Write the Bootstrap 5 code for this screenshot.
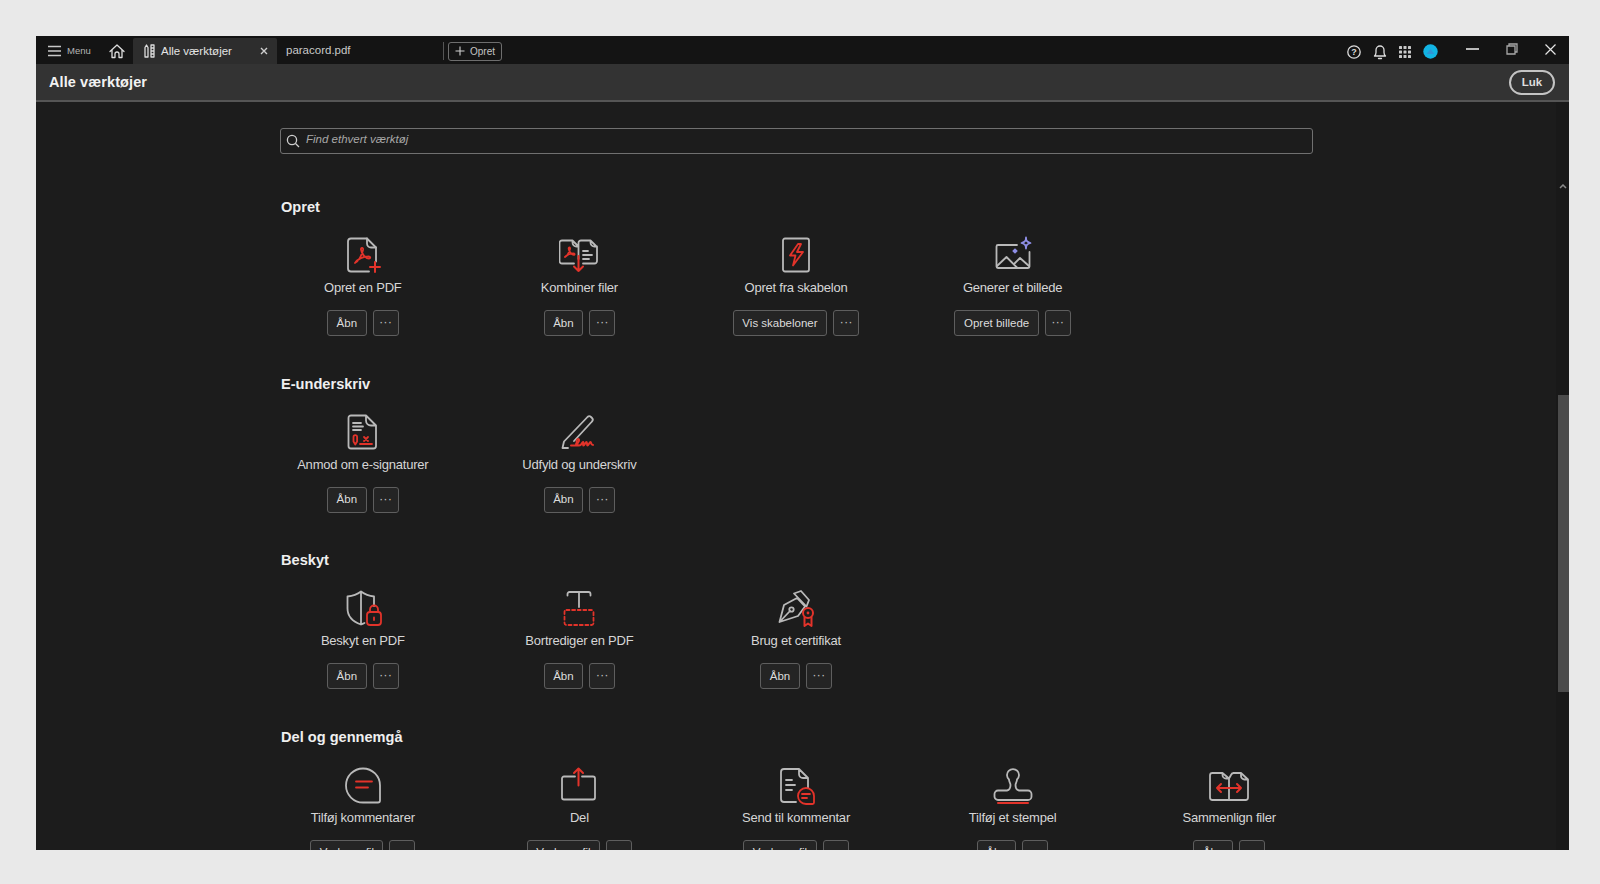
<!DOCTYPE html>
<html lang="da">
<head>
<meta charset="utf-8">
<title>Alle værktøjer</title>
<link href="https://cdn.jsdelivr.net/npm/bootstrap@5.3.0/dist/css/bootstrap.min.css" rel="stylesheet">
<style>
html,body{height:100%;overflow:hidden}
body{background:#e9e9e9;padding:36px 31px 34px 36px;font-family:"Liberation Sans",Arial,sans-serif}
.app-win{height:814px;background:#1c1c1c;color:#d9d9d9;overflow:hidden}
.tab-bar{height:28px;background:#141414;flex:none;padding-top:2px}
.menu-btn{padding-left:12px;width:74px;gap:5px;color:#b5b5b5;font-size:9.500px}
.home-btn{width:23px;margin-left:-1px;margin-right:1px}
.tab-on{width:144px;height:26px;background:#2d2d2d;color:#e4e4e4;font-size:11.500px;padding:0 9px 0 11px;border-radius:2px 2px 0 0}
.tab-lbl{margin-left:6px;padding-top:1px}
.tab-off{width:166px;padding-left:9px;color:#c9c9c9;font-size:11.500px}
.tab-sep{width:1px;height:18px;background:#555;margin-right:4px}
.new-btn{height:19px;width:54px;border:1px solid #6e6e6e;border-radius:3px;font-size:10px;color:#c4c4c4;padding:0 0 0 6px;gap:5px;background:transparent}
.win-tools{padding-right:13px;margin-top:1px}
.tool-bar{height:38px;background:#333;border-bottom:2px solid #555;flex:none;padding:1px 14px 0 13px}
.tool-title{font-size:14.500px;font-weight:700;color:#f2f2f2;letter-spacing:.1px;margin-top:1px}
.luk-btn{width:46px;height:25px;border:2px solid #c4c4c4;border-radius:13px;background:transparent;color:#ddd;font-size:11.500px;font-weight:700;padding:0;line-height:1}
.pane{min-height:0;position:relative}
.pane-in{width:1033px;margin-left:244px}
.find-box{height:26px;margin-top:26px;border:1px solid #707070;border-radius:3px;padding-left:5px;gap:6px;color:#a8a8a8;font-size:11.500px;font-style:italic}
.find-txt{padding-bottom:3px}
.sect-h{font-size:14.600px;font-weight:700;color:#efefef;margin:0;line-height:18px;padding-left:1px}
.sect-a{padding-top:44px}
.sect-wrap{height:176.500px}
.tool-grid{display:grid;grid-template-columns:repeat(5,216.600px);margin:19px 0 0 -25.500px}
.tool-cell{text-align:center}
.tool-ico{display:block;width:40px;height:40px;margin:0 auto}
.tool-name{font-size:13px;line-height:16px;margin-top:5px;color:#d6d6d6;letter-spacing:-.22px;white-space:nowrap}
.act-row{margin-top:14px;gap:6px}
.act-btn{height:26px;border:1px solid #5e5e5e;border-radius:3px;background:#242424;color:#dcdcdc;font-size:11.500px;line-height:1;padding:1px 8.500px 0;white-space:nowrap}
.act-more{width:26px;padding:0 0 3px;color:#bbb;font-size:13px}
.scr-track{position:absolute;right:0;top:0;bottom:0;width:13px;background:#191919}
.scr-up{position:absolute;right:2px;top:82px}
.scr-thumb{position:absolute;right:0;top:293px;width:11px;height:297px;background:#4b4b4b}
svg{flex:none}
.gy{fill:none;stroke:#b9b9b9;stroke-width:1.800;stroke-linecap:round;stroke-linejoin:round}
.rd{fill:none;stroke:#e2332a;stroke-width:1.800;stroke-linecap:round;stroke-linejoin:round}
.lv{fill:none;stroke:#8e8ee6;stroke-width:1.800;stroke-linejoin:round}
.rd-b{stroke-width:2}
.tb-ico{fill:none;stroke:#ddd;stroke-width:1.300;stroke-linecap:round;stroke-linejoin:round}
.gap-a{margin-right:10px}
.gap-b{margin-right:11px}
.gap-c{margin-right:28px}
.gap-d{margin-right:27px;margin-top:-5px}
.gap-e{margin-top:-5px}
</style>
</head>
<body>
<div class="app-win d-flex flex-column">
  <div class="tab-bar d-flex align-items-center">
    <div class="menu-btn d-flex align-items-center"><svg width="14" height="12" viewBox="0 0 14 12"><path d="M0 1.500h13M0 6h13M0 10.500h13" stroke="#c8c8c8" stroke-width="1.300" fill="none"/></svg><span>Menu</span></div>
    <div class="home-btn d-flex align-items-center"><svg width="16" height="15" viewBox="0 0 16 15"><path class="tb-ico" d="M1 7.500 8 1l7 6.500M3 6v7.500h3V10a2 2 0 0 1 4 0v3.500h3V6"/></svg></div>
    <div class="tab-on d-flex align-items-center"><svg width="11" height="14" viewBox="0 0 11 14"><path class="tb-ico" d="M1 3.500 2.500 1 4 3.500V13H1zM7 1h3v12H7zM7 4h3M7 7h3M7 10h3"/></svg><span class="tab-lbl flex-grow-1">Alle værktøjer</span><svg width="8" height="8" viewBox="0 0 8 8"><path d="M1 1l6 6M7 1 1 7" stroke="#cfcfcf" stroke-width="1.400"/></svg></div>
    <div class="tab-off">paracord.pdf</div>
    <div class="tab-sep"></div>
    <button class="new-btn d-flex align-items-center" type="button"><svg width="10" height="10" viewBox="0 0 10 10"><path d="M5 .5v9M.5 5h9" stroke="#d0d0d0" stroke-width="1.100"/></svg><span>Opret</span></button>
    <div class="flex-grow-1"></div>
    <div class="d-flex align-items-center win-tools">
      <svg class="gap-a" width="16" height="16" viewBox="0 0 16 16"><circle class="tb-ico" cx="8" cy="8" r="6.200"/><text x="8" y="11.200" text-anchor="middle" font-size="9" font-weight="700" fill="#ddd" font-family="Liberation Sans">?</text></svg>
      <svg class="gap-a" width="16" height="16" viewBox="0 0 16 16"><path class="tb-ico" d="M2.500 12h11c-1-1-1.500-2-1.500-3.500V6a4 4 0 0 0-8 0v2.500C4 10 3.500 11 2.500 12zM6.500 14.500h3"/></svg>
      <svg class="gap-b" width="14" height="14" viewBox="0 0 14 14"><g fill="#c9c9c9"><rect x="1" y="1" width="3" height="3" rx=".6"/><rect x="5.500" y="1" width="3" height="3" rx=".6"/><rect x="10" y="1" width="3" height="3" rx=".6"/><rect x="1" y="5.500" width="3" height="3" rx=".6"/><rect x="5.500" y="5.500" width="3" height="3" rx=".6"/><rect x="10" y="5.500" width="3" height="3" rx=".6"/><rect x="1" y="10" width="3" height="3" rx=".6"/><rect x="5.500" y="10" width="3" height="3" rx=".6"/><rect x="10" y="10" width="3" height="3" rx=".6"/></g></svg>
      <svg class="gap-c" width="15" height="15" viewBox="0 0 15 15"><circle cx="7.500" cy="7.500" r="7.200" fill="#12b4e4"/><path d="M3.500 10 7.500 5l4 5z" fill="#2f95d6"/></svg>
      <svg class="gap-d" width="13" height="4" viewBox="0 0 13 4"><path d="M0 2h13" stroke="#e5e5e5" stroke-width="1.600"/></svg>
      <svg class="gap-d" width="12" height="12" viewBox="0 0 12 12"><path d="M3 3V1h8v8H9M1 3h8v8H1z" fill="none" stroke="#a8a8a8" stroke-width="1.300"/></svg>
      <svg class="gap-e" width="11" height="11" viewBox="0 0 11 11"><path d="M.5.5l10 10M10.500.5l-10 10" stroke="#e5e5e5" stroke-width="1.200"/></svg>
    </div>
  </div>
  <div class="tool-bar d-flex align-items-center justify-content-between">
    <div class="tool-title">Alle værktøjer</div>
    <button class="luk-btn" type="button">Luk</button>
  </div>
  <div class="pane flex-grow-1 overflow-hidden">
    <div class="scr-track"></div>
    <div class="pane-in">
      <div class="find-box d-flex align-items-center">
        <svg width="14" height="14" viewBox="0 0 14 14"><circle cx="6" cy="6" r="4.600" fill="none" stroke="#cfcfcf" stroke-width="1.300"/><path d="M9.500 9.500 13 13" stroke="#cfcfcf" stroke-width="1.300"/></svg>
        <span class="find-txt">Find ethvert værktøj</span>
      </div>
      <div class="sect-a">
        <div class="sect-wrap">
          <h2 class="sect-h">Opret</h2>
          <div class="tool-grid">
            <div class="tool-cell">
              <svg class="tool-ico" viewBox="0 0 40 40"><path class="gy" d="M26 36.500H8a3 3 0 0 1-3-3V6.500a3 3 0 0 1 3-3h16l9 9v14"/><path class="gy" d="M24 3.500v5a4 4 0 0 0 4 4h5"/><path class="rd" d="M12 28c3-1 6.500-7 8-13 .6-2.700-2.400-3-2-.3.7 4.500 4.800 8.800 8 8.800 1.800 0 1.600-2.200-.4-2.200-5 0-11 2.500-13.600 6.700z"/><path class="rd rd-b" d="M32 27v10M27 32h10"/></svg>
              <div class="tool-name">Opret en PDF</div>
              <div class="act-row d-flex justify-content-center"><button class="act-btn" type="button">Åbn</button><button class="act-btn act-more" type="button">···</button></div>
            </div>
            <div class="tool-cell">
              <svg class="tool-ico" viewBox="0 0 40 40"><path class="gy" d="M15 28.500H3A2.500 2.500 0 0 1 .5 26V8A2.500 2.500 0 0 1 3 5.500h10.500l6 6M13.500 5.500v2a4 4 0 0 0 4 4h2M24 28.500h11.500A2.500 2.500 0 0 0 38 26V12l-6.500-6.500H22A2.500 2.500 0 0 0 19.500 8v16M31.500 5.500v2a4 4 0 0 0 4 4H38"/><path class="rd" d="M6 22c2-1 4-4 5-8 .4-2-1.500-2-1.300-.2.400 3 3 6 5 6 1.500 0 1-1.500-.5-1.500-3 0-6 1.500-8.200 3.700z"/><path class="gy" d="M24 16h5M24 20h9M24 24h6"/><path class="rd rd-b" d="M19.500 21v15M15 31.500l4.500 4.500 4.500-4.500"/></svg>
              <div class="tool-name">Kombiner filer</div>
              <div class="act-row d-flex justify-content-center"><button class="act-btn" type="button">Åbn</button><button class="act-btn act-more" type="button">···</button></div>
            </div>
            <div class="tool-cell">
              <svg class="tool-ico" viewBox="0 0 40 40"><rect class="gy" x="7" y="3.500" width="26" height="33" rx="2"/><path class="rd" d="M22 9 14 20.500h5.500L17 30.500l10-13.500h-6L25 9z"/></svg>
              <div class="tool-name">Opret fra skabelon</div>
              <div class="act-row d-flex justify-content-center"><button class="act-btn" type="button">Vis skabeloner</button><button class="act-btn act-more" type="button">···</button></div>
            </div>
            <div class="tool-cell">
              <svg class="tool-ico" viewBox="0 0 40 40"><path class="gy" d="M24 10H5a1.500 1.500 0 0 0-1.500 1.500v20A1.500 1.500 0 0 0 5 33h30a1.500 1.500 0 0 0 1.500-1.500V17"/><path class="gy" d="M4 31l9.500-9 11 11M22 28l5-5 9 8"/><path class="lv" d="M33 2.500c0 3.500 1 4.500 4.500 5.500-3.500 1-4.500 2-4.500 5.500 0-3.500-1-4.500-4.500-5.500 3.500-1 4.500-2 4.500-5.500z"/><rect x="20" y="14" width="4" height="4" transform="rotate(45 22 16)" fill="#8e8ee6"/></svg>
              <div class="tool-name">Generer et billede</div>
              <div class="act-row d-flex justify-content-center"><button class="act-btn" type="button">Opret billede</button><button class="act-btn act-more" type="button">···</button></div>
            </div>
          </div>
        </div>
        <div class="sect-wrap">
          <h2 class="sect-h">E-underskriv</h2>
          <div class="tool-grid">
            <div class="tool-cell">
              <svg class="tool-ico" viewBox="0 0 40 40"><path class="gy" d="M8 36.500A2.500 2.500 0 0 1 5.500 34V6A2.500 2.500 0 0 1 8 3.500h15l10 10V34a2.500 2.500 0 0 1-2.500 2.500zM23 3.500v5a5 5 0 0 0 5 5h5M10 11h8M10 14.500h10M10 18h8"/><path class="rd" d="M10.500 25a1.800 1.800 0 0 1 3.600 0v4.500l-1.800 3-1.800-3zM21 25l4 4M25 25l-4 4M17 32h12"/></svg>
              <div class="tool-name">Anmod om e-signaturer</div>
              <div class="act-row d-flex justify-content-center"><button class="act-btn" type="button">Åbn</button><button class="act-btn act-more" type="button">···</button></div>
            </div>
            <div class="tool-cell">
              <svg class="tool-ico" viewBox="0 0 40 40"><path class="gy" d="M9 36H3.500L5 29.500 28.500 5a2.500 2.500 0 0 1 3.500 0l1 1a2.500 2.500 0 0 1 0 3.500L15 29"/><path class="rd rd-b" d="M12 33.500h6M17 32c3-1 4-5 2-5s-2 6.500 1 6.500 3-3.500 4-3.500-.5 3.500.5 3.500 2-3.500 3-3.500 0 3.500 1 3.500 2-3.500 3-3.500 0 3 2.500 3"/></svg>
              <div class="tool-name">Udfyld og underskriv</div>
              <div class="act-row d-flex justify-content-center"><button class="act-btn" type="button">Åbn</button><button class="act-btn act-more" type="button">···</button></div>
            </div>
          </div>
        </div>
        <div class="sect-wrap">
          <h2 class="sect-h">Beskyt</h2>
          <div class="tool-grid">
            <div class="tool-cell">
              <svg class="tool-ico" viewBox="0 0 40 40"><path class="gy" d="M31 18V8.500C26 8 22 6.500 18 3.500 14 6.500 9 8 4.500 8.500v12c0 7 5 13 13.500 16 1.500-.5 2.500-1 3.500-1.500M18 3.500v33"/><rect class="rd" x="24" y="24" width="14" height="13" rx="3"/><path class="rd" d="M27 24v-2.500a4 4 0 0 1 8 0V24M31 29.500v2.500"/></svg>
              <div class="tool-name">Beskyt en PDF</div>
              <div class="act-row d-flex justify-content-center"><button class="act-btn" type="button">Åbn</button><button class="act-btn act-more" type="button">···</button></div>
            </div>
            <div class="tool-cell">
              <svg class="tool-ico" viewBox="0 0 40 40"><path class="gy" d="M8.500 7.500V6a2 2 0 0 1 2-2h19a2 2 0 0 1 2 2v1.500M20 4v15"/><rect class="rd" x="5.500" y="22" width="29" height="15" rx="2" stroke-dasharray="3 2.600"/></svg>
              <div class="tool-name">Bortrediger en PDF</div>
              <div class="act-row d-flex justify-content-center"><button class="act-btn" type="button">Åbn</button><button class="act-btn act-more" type="button">···</button></div>
            </div>
            <div class="tool-cell">
              <svg class="tool-ico" viewBox="0 0 40 40"><path class="gy" d="M3.500 34 8 17l13-7 8 8.500-7 9.500zM18 5.500 25 3l8 9-2.500 6.500zM3.500 34 14 23"/><circle class="gy" cx="15.500" cy="21.500" r="2.200"/><circle class="rd rd-b" cx="32" cy="25" r="5"/><circle cx="32" cy="25" r="1.400" fill="#e2332a"/><path class="rd rd-b" d="M28.500 29.500V38l3.500-2.500 3.500 2.500v-8.500"/></svg>
              <div class="tool-name">Brug et certifikat</div>
              <div class="act-row d-flex justify-content-center"><button class="act-btn" type="button">Åbn</button><button class="act-btn act-more" type="button">···</button></div>
            </div>
          </div>
        </div>
        <div class="sect-wrap">
          <h2 class="sect-h">Del og gennemgå</h2>
          <div class="tool-grid">
            <div class="tool-cell">
              <svg class="tool-ico" viewBox="0 0 40 40"><path class="gy" d="M20 3.500a17 17 0 1 0 0 34h15a2 2 0 0 0 2-2v-15a17 17 0 0 0-17-17z"/><path class="rd" d="M13 16.500h16M13 22.500h12"/></svg>
              <div class="tool-name">Tilføj kommentarer</div>
              <div class="act-row d-flex justify-content-center"><button class="act-btn" type="button">Vælg en fil</button><button class="act-btn act-more" type="button">···</button></div>
            </div>
            <div class="tool-cell">
              <svg class="tool-ico" viewBox="0 0 40 40"><path class="gy" d="M16 11.500H5a2 2 0 0 0-2 2v19a2 2 0 0 0 2 2h29a2 2 0 0 0 2-2v-19a2 2 0 0 0-2-2H23"/><path class="rd rd-b" d="M19.500 20.500v-17M15 8l4.500-4.500L24 8"/></svg>
              <div class="tool-name">Del</div>
              <div class="act-row d-flex justify-content-center"><button class="act-btn" type="button">Vælg en fil</button><button class="act-btn act-more" type="button">···</button></div>
            </div>
            <div class="tool-cell">
              <svg class="tool-ico" viewBox="0 0 40 40"><path class="gy" d="M20 37H8a3 3 0 0 1-3-3V7a3 3 0 0 1 3-3h15l9 9v10M23 4v5a4 4 0 0 0 4 4h5M10 15h6M10 20h9M10 25h6"/><path class="rd" d="M30 23a8 8 0 1 0 0 16h6.500a1.500 1.500 0 0 0 1.500-1.500V31a8 8 0 0 0-8-8z"/><path class="rd" d="M26 29h8M26 33h5"/></svg>
              <div class="tool-name">Send til kommentar</div>
              <div class="act-row d-flex justify-content-center"><button class="act-btn" type="button">Vælg en fil</button><button class="act-btn act-more" type="button">···</button></div>
            </div>
            <div class="tool-cell">
              <svg class="tool-ico" viewBox="0 0 40 40"><path class="gy" d="M16 14.500A6 6 0 1 1 24 14.500c0 2.500-1.500 3.500-1.500 5.500 0 2.500 1 5 3.500 5.500h9a3.500 3.500 0 0 1 3.500 3.500v2.500a3.500 3.500 0 0 1-3.500 3.500H5a3.500 3.500 0 0 1-3.500-3.500V29A3.500 3.500 0 0 1 5 25.500h9c2.500-.5 3.500-3 3.500-5.500 0-2-1.500-3-1.500-5.500z"/><path class="rd rd-b" d="M5 38h30"/></svg>
              <div class="tool-name">Tilføj et stempel</div>
              <div class="act-row d-flex justify-content-center"><button class="act-btn" type="button">Åbn</button><button class="act-btn act-more" type="button">···</button></div>
            </div>
            <div class="tool-cell">
              <svg class="tool-ico" viewBox="0 0 40 40"><path class="gy" d="M36.500 35H3.500A2.500 2.500 0 0 1 1 32.500V10.500A2.500 2.500 0 0 1 3.500 8h10l6.500 5.500 2-3.500A3 3 0 0 1 24.500 8H32l7 6.500v18a2.500 2.500 0 0 1-2.500 2.500zM20 13.500V35M13.500 8v2a3.500 3.500 0 0 0 3.500 3.500h3M32 8v3a3.500 3.500 0 0 0 3.500 3.500H39"/><path class="rd rd-b" d="M8 23h24M12 19l-4 4 4 4M28 19l4 4-4 4"/></svg>
              <div class="tool-name">Sammenlign filer</div>
              <div class="act-row d-flex justify-content-center"><button class="act-btn" type="button">Åbn</button><button class="act-btn act-more" type="button">···</button></div>
            </div>
          </div>
        </div>
      </div>
    </div>
    <svg class="scr-up" width="8" height="5" viewBox="0 0 8 5"><path d="M1 4l3-3 3 3" fill="none" stroke="#8a8a8a" stroke-width="1.500"/></svg>
    <div class="scr-thumb"></div>
  </div>
</div>
<script src="https://cdn.jsdelivr.net/npm/bootstrap@5.3.0/dist/js/bootstrap.bundle.min.js"></script>
</body>
</html>
